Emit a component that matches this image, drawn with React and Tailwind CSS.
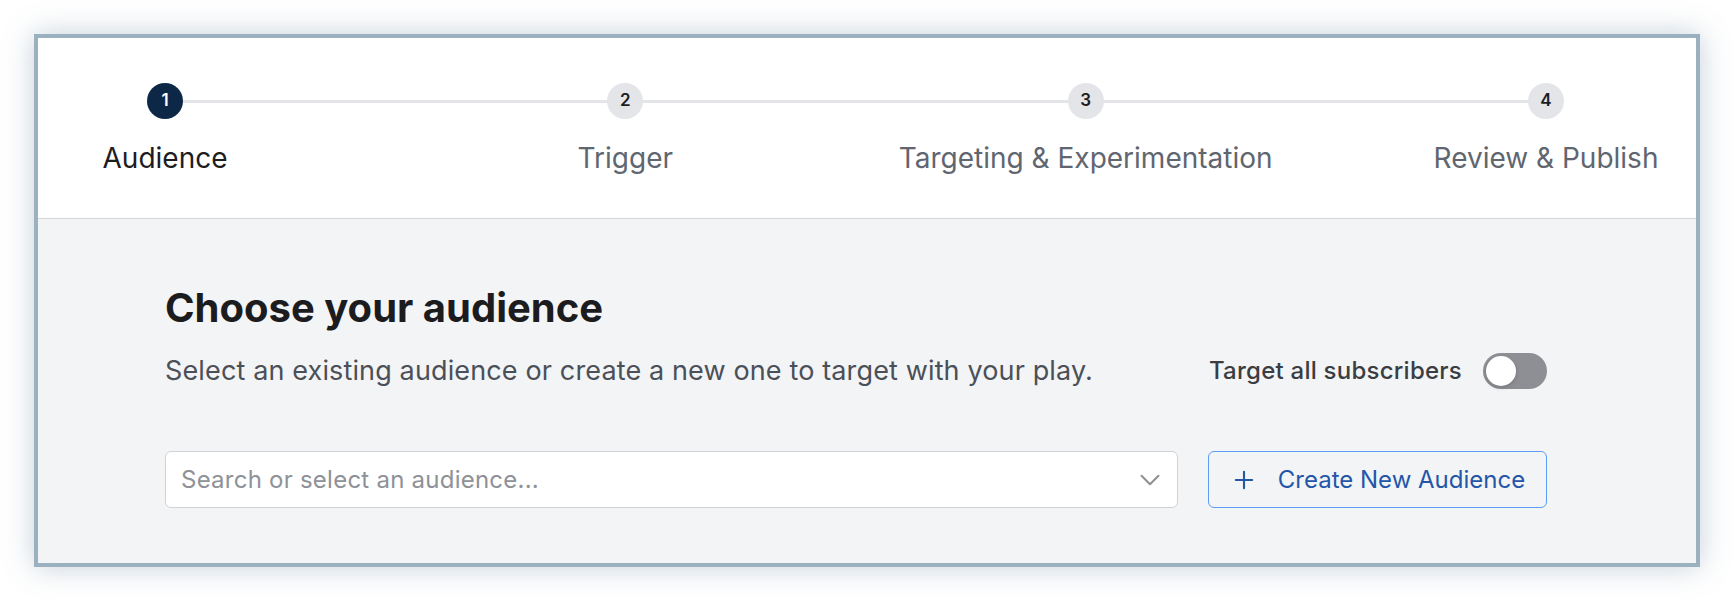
import React, { useState } from 'react';
import { ChevronDown, Plus } from 'lucide-react';

const steps = ['Audience', 'Trigger', 'Targeting & Experimentation', 'Review & Publish'];

const Stepper = ({ current }) => (
  <div className="relative flex justify-between pl-[27px] pr-[50px]">
    <div className="absolute left-[127px] right-[150px] top-[17px] h-[3px] bg-[#e3e5e9]" />
    {steps.map((label, i) => (
      <div key={label} className="relative w-[200px] flex flex-col items-center">
        <div
          className={`w-9 h-9 rounded-full flex items-center justify-center text-[17px] font-semibold ${
            i === current ? 'bg-[#0d2847] text-white' : 'bg-[#e3e5e9] text-[#1d1d1f]'
          }`}
        >
          {i + 1}
        </div>
        <div
          className={`mt-[23px] whitespace-nowrap text-[28px] leading-8 ${
            i === current ? 'text-[#1d1d1f]' : 'text-[#5f6670]'
          }`}
        >
          {label}
        </div>
      </div>
    ))}
  </div>
);

const Toggle = ({ on, setOn }) => (
  <button
    onClick={() => setOn(!on)}
    className={`w-16 h-9 rounded-full p-[3px] flex items-center ${on ? 'bg-[#2356a8] justify-end' : 'bg-[#8e8f94] justify-start'}`}
  >
    <span className="w-[30px] h-[30px] rounded-full bg-white shadow-[0_2px_4px_rgba(0,0,0,0.15)]" />
  </button>
);

export default function App() {
  const [allSubs, setAllSubs] = useState(false);
  const [search, setSearch] = useState('');

  return (
    <div className="min-h-screen bg-white pt-[34px] px-[34px] font-['Inter','Noto_Sans',sans-serif]">
      <div className="border-4 border-[#9cb1c0] shadow-[0_0_28px_rgba(90,120,145,0.35)]">
        <div className="bg-white pt-[45px] pb-[44px] border-b border-[#d4d6da]">
          <Stepper current={0} />
        </div>

        <div className="bg-[#f3f4f6] pl-[127px] pr-[149px] pt-[69px] pb-[55px]">
          <h2 className="text-[40px] leading-10 font-bold text-[#1c1c1e]">Choose your audience</h2>

          <div className="mt-[25px] flex items-center justify-between">
            <p className="text-[27px] leading-8 tracking-[0.005em] text-[#4b5058]">
              Select an existing audience or create a new one to target with your play.
            </p>
            <div className="flex items-center gap-[21px]">
              <span className="text-[24px] tracking-[0.01em] font-medium text-[#3a3d42]">Target all subscribers</span>
              <Toggle on={allSubs} setOn={setAllSubs} />
            </div>
          </div>

          <div className="mt-[62px] flex gap-[30px]">
            <div className="flex-1 h-[57px] bg-white border border-[#cfd2d7] rounded-md flex items-center pl-[15px] pr-[10px]">
              <input
                value={search}
                onChange={e => setSearch(e.target.value)}
                placeholder="Search or select an audience..."
                className="flex-1 bg-transparent outline-none text-[24px] tracking-[0.01em] text-[#1c1c1e] placeholder:text-[#8e9197]"
              />
              <ChevronDown size={34} strokeWidth={1.4} className="text-[#8e8f94]" />
            </div>
            <button className="w-[339px] h-[57px] border border-[#5c9cf5] rounded-md flex items-center justify-center gap-[20px] text-[#2356a8] text-[24px]">
              <Plus size={28} strokeWidth={1.8} />
              Create New Audience
            </button>
          </div>
        </div>
      </div>
    </div>
  );
}
